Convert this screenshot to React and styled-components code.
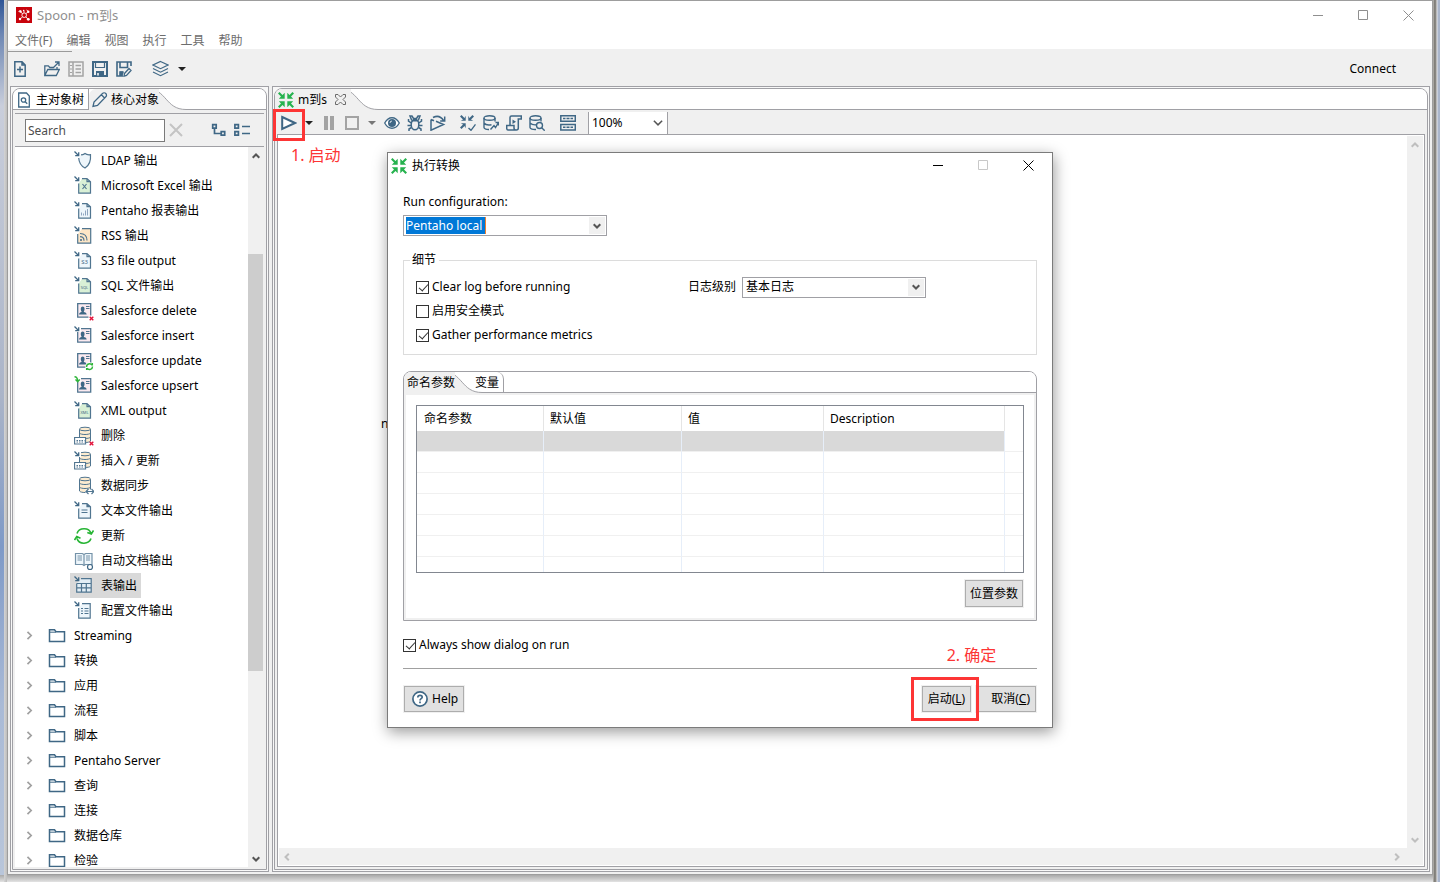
import React, { useState } from 'react';
import styled, { createGlobalStyle, css } from 'styled-components';

const colors = {
  chrome: '#f0f0f0',
  line: '#a0a0a5',
  icon: '#3f6785',
  iconSoft: '#507590',
  iconPale: '#eef6fb',
  disabled: '#a3a3a3',
  red: '#fd3535',
  green: '#26b24e',
};

const GlobalStyle = createGlobalStyle`
  * {
    box-sizing: border-box;
  }
  body {
    margin: 0;
    font-family: 'Noto Sans', 'Noto Sans CJK SC', sans-serif;
    font-size: 12px;
    line-height: 16px;
    color: #000;
  }
  button, input, select {
    font: inherit;
    color: inherit;
    margin: 0;
  }
  svg {
    display: block;
    flex: none;
  }
`;

const Desktop = styled.div`
  display: flex;
  height: 100vh;
  min-height: 760px;
  padding: 0 7px 7px 7px;
  background:
    linear-gradient(90deg, transparent 4px, #d4d4d4 4px, #bdbdbd 7px, transparent 7px) left / 7px 100% no-repeat,
    linear-gradient(90deg, #d5d3cf 0, #7d7b76 1px, #8d8b86 3px, #e8e8ea 4px, #aab6cc 5px, #aab6cc 7px) right / 7px 100% no-repeat,
    linear-gradient(180deg, #a9a9a9, #e3e3e3) bottom / 100% 7px no-repeat,
    linear-gradient(180deg, #2f5596 0, #6f88b4 4%, #c9cedb 12%, #aab4c8 45%, #7f9ac7 62%, #a9bad6 80%, #b9c6da 100%);
`;
const Window = styled.div`
  flex: 1;
  min-width: 0;
  display: flex;
  flex-direction: column;
  border: 1px solid #9d9d9d;
  background-color: ${colors.chrome};
`;
const TitleBar = styled.header`
  display: flex;
  align-items: center;
  height: 30px;
  padding: 0 18px 2px 8px;
  gap: 5px;
  background-color: #fff;
  font-size: 13px;
  color: #8f8f8f;
`;
const WindowButtons = styled.div`
  display: flex;
  gap: 34px;
  margin-left: auto;
`;
const PlainButton = styled.button`
  display: flex;
  align-items: center;
  justify-content: center;
  padding: 0;
  border: none;
  background: none;
`;
const MenuBar = styled.nav`
  display: flex;
  gap: 14px;
  height: 18px;
  padding: 2px 0 0 7px;
  background-color: #fff;
`;
const MenuItem = styled(PlainButton)`
  color: #6d6d6d;
`;
const MainToolbar = styled.div`
  display: flex;
  align-items: center;
  gap: 8px;
  height: 37px;
  padding: 2px 36px 0 4px;
  background:
    linear-gradient(#9b9b9b, #9b9b9b) 0 2px / 64px 1px no-repeat;
`;
const ToolGap = styled.span`
  width: ${(props) => props.$size}px;
`;
const ConnectButton = styled(PlainButton)`
  margin-left: auto;
`;
const Panels = styled.div`
  flex: 1;
  min-height: 0;
  display: flex;
  gap: 3px;
  padding: 0 2px 2px 2px;
`;
const Panel = styled.section`
  display: flex;
  flex: ${(props) => (props.$wide ? '1' : '0 0 259px')};
  min-width: 0;
  padding: 1px;
  border: 1px solid ${colors.line};
  background-color: #f8f8f8;
`;
const PanelFrame = styled.div`
  flex: 1;
  min-width: 0;
  display: flex;
  flex-direction: column;
  border: 1px solid ${colors.line};
  border-radius: 8px 8px 0 0;
  background-color: ${colors.chrome};
`;
const TabHeader = styled.div`
  display: flex;
  height: 21px;
  flex: none;
  border-radius: 7px 7px 0 0;
  background-color: #fff;
  box-shadow: inset 0 -1px 0 ${colors.line};
  overflow: hidden;
`;
const Tab = styled(PlainButton)`
  position: relative;
  gap: 3px;
  padding: 0 4px;
  ${(props) =>
    props.$active
      ? css`
          background-color: ${colors.chrome};
          padding: 0 0 0 3px;
          border-radius: 7px 0 0 0;
        `
      : css`
          border-right: 1px solid ${colors.line};
          border-radius: 0 ${props.$rounded ? '7px' : '0'} 0 0;
        `}
`;
const VariablesTab = styled(Tab)`
  margin-left: -11px;
`;
const FileTab = styled(Tab)`
  gap: 4px;
  padding-right: 5px;
`;
const TabText = styled.span`
  position: relative;
`;
const TabClose = styled.span`
  margin-left: 4px;
`;
const CurveSvg = styled.svg`
  margin-left: -12px;
`;

const PanelBody = styled.div`
  flex: 1;
  min-height: 0;
  display: flex;
  flex-direction: column;
  padding: ${(props) => (props.$top ? '3px' : '0')} 2px 2px 2px;
`;
const SearchBar = styled.div`
  display: flex;
  align-items: center;
  height: 34px;
  flex: none;
  padding: 0 14px 0 10px;
  border: solid ${colors.line};
  border-width: 1px 0;
`;
const SearchInput = styled.input`
  width: 140px;
  height: 23px;
  padding: 0 2px;
  border: 1px solid #7a7a7a;
  background-color: #fff;
  &::placeholder {
    color: #4d4d4d;
    opacity: 1;
  }
`;
const SearchTools = styled.div`
  display: flex;
  gap: 7px;
  margin-left: auto;
`;
const TreeArea = styled.div`
  flex: 1;
  min-height: 0;
  display: flex;
  background-color: #fff;
`;
const Tree = styled.ul`
  flex: 1;
  margin: 0;
  padding: 1px 0 0;
  list-style: none;
  overflow: hidden;
`;
const Row = styled.li`
  display: flex;
  height: 25px;
  padding-left: ${(props) => (props.$leaf ? '55px' : '10px')};
`;
const Leaf = styled.div`
  display: flex;
  align-items: center;
  gap: 7px;
  padding: 0 4px;
  background-color: ${(props) => (props.$selected ? '#d9d9d9' : 'transparent')};
`;
const Folder = styled.div`
  display: flex;
  align-items: center;
  gap: 8px;
`;
const FolderLead = styled.span`
  display: flex;
  align-items: center;
  gap: 14px;
`;
const ScrollBar = styled.div`
  display: flex;
  flex-direction: ${(props) => (props.$horizontal ? 'row' : 'column')};
  justify-content: space-between;
  flex: 0 0 16px;
  padding-right: ${(props) => (props.$horizontal ? '18px' : '0')};
  background-color: ${colors.chrome};
`;
const ScrollButton = styled(PlainButton)`
  width: 16px;
  height: 17px;
`;
const ScrollSpace = styled.div`
  flex: ${(props) => props.$share};
`;
const ScrollThumb = styled(ScrollSpace)`
  width: 15px;
  background-color: #cdcdcd;
`;

const EditorToolbar = styled.div`
  display: flex;
  align-items: center;
  gap: 7px;
  height: 24px;
  flex: none;
  padding: 2px 0 0 4px;
`;
const RunSlot = styled.div`
  position: relative;
`;
const ZoomSlot = styled.div`
  display: flex;
  margin-left: 5px;
`;
const Highlight = styled.span`
  position: absolute;
  inset: ${(props) => props.$inset};
  border: 3px solid ${colors.red};
  pointer-events: none;
  z-index: 3;
`;
const Note = styled.span`
  position: absolute;
  font-size: 16px;
  line-height: 20px;
  color: ${colors.red};
  white-space: nowrap;
`;
const CanvasNote = styled(Note)`
  left: 13px;
  top: 10px;
`;
const FooterNote = styled(Note)`
  left: 25px;
  bottom: 47px;
`;
const Canvas = styled.main`
  position: relative;
  flex: 1;
  min-height: 0;
  display: flex;
  flex-direction: column;
  padding: 1px;
  border: 1px solid ${colors.line};
  background-color: #fff;
`;
const CanvasRow = styled.div`
  flex: 1;
  display: flex;
`;
const Drawing = styled.div`
  flex: 1;
`;
const StepLabel = styled.span`
  position: absolute;
  left: 103px;
  top: 281px;
`;

const SelectBox = styled.span`
  position: relative;
  display: inline-flex;
  width: ${(props) => props.$width}px;
  height: ${(props) => props.$height}px;
`;
const Select = styled.select`
  appearance: none;
  width: 100%;
  height: 100%;
  padding: 0 20px 0 3px;
  border: 1px solid ${colors.line};
  border-width: ${(props) => (props.$sidesOnly ? '0 1px' : '1px')};
  border-radius: 0;
  background-color: #fff;
`;
const SelectArrow = styled.span`
  position: absolute;
  top: 2px;
  right: 2px;
  bottom: 2px;
  width: 16px;
  display: flex;
  align-items: center;
  justify-content: center;
  background-color: ${(props) => (props.$flat ? 'transparent' : colors.chrome)};
  pointer-events: none;
`;

const DialogWindow = styled.form`
  position: absolute;
  left: 109px;
  top: 17px;
  width: 666px;
  border: 1px solid #7b7b7b;
  background-color: #fff;
  box-shadow: 1px 4px 14px rgba(0, 0, 0, 0.4);
  z-index: 2;
`;
const DialogTitle = styled.div`
  display: flex;
  align-items: center;
  gap: 5px;
  height: 25px;
  padding: 0 18px 0 3px;
`;
const DialogBody = styled.div`
  display: flex;
  flex-direction: column;
  padding: 16px 15px 15px;
`;
const Combo = styled.div`
  display: flex;
  align-items: center;
  justify-content: space-between;
  width: 204px;
  height: 21px;
  margin: 5px 0 1px;
  padding: 1px;
  border: 1px solid ${colors.line};
`;
const ComboInput = styled.input`
  width: 80px;
  height: 17px;
  margin-left: 1px;
  padding: 0;
  border: none;
  border-right: 1px solid #f08030;
  outline: none;
  background-color: #0078d7;
  color: #fff;
`;
const ComboButton = styled(PlainButton)`
  width: 16px;
  height: 17px;
  background-color: ${colors.chrome};
`;
const Details = styled.fieldset`
  margin: 15px 0 0;
  padding: 7px 12px 7px;
  border: 1px solid #dcdcdc;
`;
const Legend = styled.legend`
  margin-left: -6px;
  padding: 0 3px 0 2px;
`;
const DetailsGrid = styled.div`
  display: grid;
  grid-template-columns: 272px 1fr;
  grid-auto-rows: 24px;
  align-items: center;
`;
const CheckLabel = styled.label`
  display: flex;
  align-items: center;
  gap: 3px;
  grid-column: 1;
`;
const Checkbox = styled.input`
  appearance: none;
  position: relative;
  width: 13px;
  height: 13px;
  border: 1px solid #333;
  background-color: #fff;
  &:checked::after {
    content: '';
    position: absolute;
    left: 4px;
    top: 0;
    width: 4px;
    height: 8px;
    border: solid #333;
    border-width: 0 1px 1px 0;
    transform: rotate(42deg);
  }
`;
const LevelLabel = styled.label`
  display: flex;
  align-items: center;
  gap: 6px;
  grid-column: 2;
  grid-row: 1;
`;
const ParamFolder = styled.div`
  margin-top: 16px;
  border: 1px solid ${colors.line};
  border-radius: 8px 8px 0 0;
`;
const ParamBody = styled.div`
  display: flex;
  flex-direction: column;
  align-items: flex-end;
  gap: 7px;
  padding: 10px 10px 11px;
  border: 2px solid ${colors.chrome};
`;
const TableFrame = styled.div`
  width: 100%;
  height: 168px;
  overflow: hidden;
  border: 1px solid #828790;
`;
const ParamTable = styled.table`
  width: 100%;
  table-layout: fixed;
  border-collapse: separate;
  border-spacing: 0;
`;
const HeadCell = styled.th`
  width: ${(props) => (props.$width ? `${props.$width}px` : 'auto')};
  height: 25px;
  padding: 0 6px;
  border-right: ${(props) => (props.$width ? '1px solid #e5e5e5' : 'none')};
  text-align: left;
  font-weight: normal;
  &:first-child {
    padding-left: 7px;
  }
`;
const Cell = styled.td`
  height: 21px;
  padding: 0;
  border-bottom: 1px solid #f0f0f0;
  border-right: ${(props) => (props.$filler ? 'none' : '1px solid #e6eef9')};
  background-color: ${(props) => (props.$selected ? '#d9d9d9' : '#fff')};
`;
const AlwaysLabel = styled(CheckLabel)`
  margin-top: 16px;
`;
const Footer = styled.div`
  display: flex;
  justify-content: space-between;
  margin-top: 15px;
  padding: 17px 1px 0;
  border-top: 1px solid #a0a0a0;
`;
const FooterActions = styled.div`
  display: flex;
  gap: 5px;
`;
const StartSlot = styled.div`
  position: relative;
`;
const PushButton = styled.button`
  display: flex;
  align-items: center;
  gap: 4px;
  height: 26px;
  padding: ${(props) => props.$padding || '0 5px'};
  border: 1px solid #adadad;
  background-color: #e1e1e1;
  box-shadow: 0 0 0 1px ${colors.chrome};
  white-space: nowrap;
`;
const PositionButton = styled(PushButton)`
  height: 27px;
  margin-right: 1px;
  padding: 0 4px;
`;

const Glyph = ({ size = 16, color = colors.icon, width = 1.5, children }) => (
  <svg
    width={size}
    height={size}
    viewBox={`0 0 ${size} ${size}`}
    fill="none"
    stroke={color}
    strokeWidth={width}
    aria-hidden="true"
  >
    {children}
  </svg>
);

const TabCurve = () => (
  <CurveSvg width="39" height="21" viewBox="0 0 39 21" aria-hidden="true">
    <path d="M0 0H39V21H0z" fill="#fff" />
    <path d="M0 0C20 0 18 20.500 38 20.500L39 21H0Z" fill={colors.chrome} />
    <path d="M0 -0.500C20 0 18 20.500 39 20.500" fill="none" stroke={colors.line} />
  </CurveSvg>
);
const Chevron = ({ turn = 0, color = '#555', size = 8, width = 2 }) => (
  <svg width={size} height={size} viewBox="0 0 8 8" fill="none" stroke={color} strokeWidth={width} aria-hidden="true">
    <path d="M0.700 2.200 4 5.500 7.300 2.200" transform={`rotate(${turn} 4 4)`} />
  </svg>
);
const Caret = ({ color = '#222' }) => (
  <svg width="10" height="4" viewBox="0 0 10 4" fill={color} aria-hidden="true">
    <path d="M1 0H9L5 4z" />
  </svg>
);
const MinimizeIcon = () => (
  <Glyph size={11} color="currentColor" width={1}>
    <path d="M0 5.500h10" />
  </Glyph>
);
const MaximizeIcon = ({ color = 'currentColor' }) => (
  <Glyph size={11} color={color} width={1}>
    <path d="M.5.500h9v9h-9z" />
  </Glyph>
);
const CloseIcon = () => (
  <Glyph size={11} color="currentColor" width={1}>
    <path d="M.5.500l10 10M10.500.500l-10 10" />
  </Glyph>
);
const AppIcon = () => (
  <svg width="16" height="16" viewBox="0 0 16 16" aria-hidden="true">
    <rect width="16" height="16" fill="#c8030c" />
    <g fill="none" stroke="#fff" strokeWidth="0.900">
      <circle cx="8.200" cy="8.200" r="2.300" />
      <path d="M6.500 6.500 4.500 5M10 6.500l2-1.500M6.500 9.800l-2 2M9.800 9.800l2 2.200M8 5.700V4M2.500 4.500l2-1M10.500 3l2 1.500M3 12.500l2-.5" />
    </g>
    <g fill="#fff">
      <circle cx="4.500" cy="4.500" r="1.200" />
      <circle cx="12.300" cy="4.700" r="1.200" />
      <circle cx="7.700" cy="3.500" r="0.800" />
      <circle cx="4" cy="12" r="1.200" />
      <circle cx="12.300" cy="12.300" r="1.400" />
    </g>
  </svg>
);
const InwardArrow = ({ turn, center }) => (
  <path
    transform={`rotate(${turn} ${center} ${center})`}
    d={`M0 1.500 1.500 0 4.500 3 ${center - 1.300} .8V${center - 1.300}H.8L3 4.500z`}
  />
);
const TransIcon = () => (
  <svg width="16" height="16" viewBox="0 0 16 16" fill={colors.green} aria-hidden="true">
    {[0, 90, 180, 270].map((turn) => (
      <InwardArrow key={turn} turn={turn} center={8} />
    ))}
  </svg>
);
const NewIcon = () => (
  <Glyph>
    <path d="M2.800.800h7.200l3.200 3.200v11.200H2.800zM10 .800V4h3.200M8 5.500v6M5 8.500h6" />
  </Glyph>
);
const OpenIcon = () => (
  <Glyph width={1.300}>
    <path d="M.8 14.500V4.800h3.500l1.500 1.700h4M.8 14.500l3-6h11.500l-3 6zM9.500 6.500 14.500 1.500M11 1h4v4M13 6v2.500" />
  </Glyph>
);
const ExploreIcon = () => (
  <Glyph color={colors.disabled}>
    <path d="M1 1h14v14H1zM5 1v14M7.500 4.500H13M7.500 8H13M7.500 11.500H13" />
    <path d="M2 4.500h2M2 8h2M2 11.500h2" strokeWidth="1" />
  </Glyph>
);
const SaveIcon = () => (
  <Glyph width={2}>
    <path d="M1 1h14v14H1z" />
    <path d="M3.500 1v5.500h9V1" strokeWidth="1.200" />
    <path d="M4 10h8v5H4z" fill={colors.icon} stroke="none" />
    <path d="M6 12v2.500" stroke="#fff" strokeWidth="1.500" />
  </Glyph>
);
const SaveAsIcon = () => (
  <Glyph width={1.600}>
    <path d="M7 15H1V1h14v4M4 1v5.500h7.500V1M4 15v-4h3" />
    <path d="M4 10.500h4L6.500 15H4z" fill={colors.icon} stroke="none" />
    <path d="M8.500 12.500 13 7.500l2 2-4.500 5-2.500.7z" strokeWidth="1.300" />
  </Glyph>
);
const LayersIcon = () => (
  <Glyph size={17} width={1.200}>
    <path d="M8.500 1.500 16 5l-7.500 3.700L1 5zM1 8.500l7.500 3.700L16 8.500M1 12l7.500 3.700L16 12" />
  </Glyph>
);
const ObjectTreeIcon = () => (
  <Glyph width={1.300}>
    <path d="M1.700 1h7.800l2.800 3v11H1.700z" />
    <circle cx="6.500" cy="8" r="2.200" />
    <path d="M8.200 9.700l2 2" />
  </Glyph>
);
const PencilIcon = () => (
  <Glyph width={1.300}>
    <path d="M1 14.500l1-4.500L10.500 1.500a1.800 1.800 0 0 1 3.300 3.300L5.500 13.500zM9.500 2.800 12.500 6" />
  </Glyph>
);
const ClearIcon = () => (
  <Glyph size={14} color="#c4c4c4" width={2}>
    <path d="M1 1l12 12M13 1 1 13" />
  </Glyph>
);
const ExpandIcon = () => (
  <Glyph width={1.700}>
    <path d="M1.700 2.700h3.500v3.500H1.700zM10.200 9.700h3.500v3.500h-3.500zM3.500 6v5.500h6.500" />
  </Glyph>
);
const CollapseIcon = () => (
  <Glyph width={1.700}>
    <path d="M.9 2.700h3.500v3.500H.9zM.9 9.700h3.500v3.500H.9zM8 4.500h8M8 11.500h8" />
  </Glyph>
);
const CloseTabIcon = () => (
  <Glyph size={11} color="#6b6b6b" width={1}>
    <path d="M.5.500h2.500L5.500 3 8 .500h2.500V3L8 5.500l2.500 2.500v2.500H8L5.500 8 3 10.500H.5V8L3 5.500.5 3z" />
  </Glyph>
);
const PlayIcon = () => (
  <Glyph width={2}>
    <path d="M1.200 2 14 8 1.200 14z" fill="#fff" />
  </Glyph>
);
const PauseIcon = () => (
  <Glyph color="none">
    <path d="M3 1h4v14H3zM9 1h4v14H9z" fill={colors.disabled} />
  </Glyph>
);
const StopIcon = () => (
  <Glyph color={colors.disabled} width={2}>
    <path d="M2 2h12v12H2z" />
  </Glyph>
);
const EyeIcon = () => (
  <Glyph width={1.300}>
    <path d="M.7 8C4.500 1 11.500 1 15.300 8 11.500 15 4.500 15 .7 8z" fill="#fff" />
    <circle cx="8" cy="8" r="4" fill={colors.icon} stroke="none" />
    <path d="M6 8a2 2 0 0 1 2-2" stroke="#fff" strokeWidth="0.800" />
  </Glyph>
);
const BugIcon = () => (
  <Glyph width={1.500}>
    <ellipse cx="8" cy="9.500" rx="3.800" ry="5.300" />
    <path d="M4.800 5.500 3 1h2l1.500 2.500h3L11 1h2l-1.800 4.500M4.300 8 1.500 6V4M4 10.500H.5M4.500 12.500l-2.500 1.500v2M11.700 8l2.800-2V4M12 10.500h3.500M11.500 12.500l2.500 1.500v2M5 5.800h6" />
  </Glyph>
);
const ReplayIcon = () => (
  <Glyph width={1.500}>
    <path d="M1 4.500v10.700L13.500 9.500 6 6.200M1 4.500l3 1.300M3 2.500c4-2 8-1 10.500 3M14.700 1.500v4.500h-4.500" />
  </Glyph>
);
const VerifyIcon = () => (
  <Glyph color="none">
    <g fill={colors.icon}>
      {[0, 90, 270].map((turn) => (
        <InwardArrow key={turn} turn={turn} center={7} />
      ))}
    </g>
    <path d="M8.500 13l2.500 2.300 4.500-6" stroke={colors.icon} strokeWidth="1.400" />
  </Glyph>
);
const ImpactIcon = () => (
  <Glyph width={1.400}>
    <ellipse cx="6.500" cy="3" rx="5.500" ry="2.200" />
    <path d="M1 3v9.500c0 1.500 3 2.200 5 2M1 8c1.500 2 5 2.200 7.500 1.700M12 3v3.500M7.500 14.500 11 10.500l1.500 2 3-5M12.500 7.500h3v3" />
  </Glyph>
);
const SqlScriptIcon = () => (
  <Glyph width={1.500}>
    <path d="M4 10.500V2.500C4 1.500 4.700 1 5.500 1h9.800v3h-3v9c0 1.300-.8 2-2 2H2c-1 0-1.300-1-1.300-2v-2.500H8V13c0 1.300.8 2 2 2" />
    <path d="M6.500 4.500 10 6.700 6.500 9z" fill={colors.icon} stroke="none" />
  </Glyph>
);
const DbExploreIcon = () => (
  <Glyph width={1.400}>
    <ellipse cx="6.500" cy="3" rx="5.500" ry="2.200" />
    <path d="M1 3v9.500c0 1.500 3 2.200 6 2M1 8c1.500 1.500 3.500 2 6 1.800M12 3v3.500" />
    <circle cx="10.500" cy="10.500" r="3" />
    <path d="M12.700 12.700l3 3" />
  </Glyph>
);
const ResultsIcon = () => (
  <Glyph width={1.500}>
    <path d="M.8.800h14.500v5.500H.8zM.8 9.500h14.500V15H.8z" />
    <path d="M3 3.500h2.500M6.500 3.500h3M10.500 3.500H13M3 12.200h2.500M6.500 12.200h3M10.500 12.200H13" strokeWidth="1.500" />
  </Glyph>
);
const HelpIcon = () => (
  <Glyph width={1.700}>
    <circle cx="8" cy="8" r="7.100" fill="#fff" />
    <path d="M5.800 6.500C5.800 3.500 10.300 3.700 10.200 6.200 10.200 7.700 8 7.700 8 9.500M8 10.500v1.700" />
  </Glyph>
);
const FolderIcon = () => (
  <Glyph size={18} width={1.500}>
    <path d="M1.500 14.500V2.700h5l1.500 2H16.500v9.800z" />
    <path d="M2 5.200h6" strokeWidth="1" />
  </Glyph>
);

const InArrow = () => (
  <path d="M.5.500 4.500 4.500M4.700 1.200v3.500H1.200" strokeWidth="1.300" stroke={colors.icon} fill="none" />
);
const Page = ({ fill }) => (
  <>
    <path d="M4.700 7.500v9.700h11.800V5.700L13 2.700H8L4.700 7.500z" fill={fill} stroke="none" />
    <path d="M4.700 7.500v9.700h11.800V5.700L13 2.700H8M13 2.700v3h3.500" strokeWidth="1.200" />
  </>
);
const Person = () => (
  <>
    <path d="M3.700 2.700h13v13.500h-13z" fill="#fbeaf0" strokeWidth="1.300" />
    <path
      d="M5 13.500c.2-2 1.800-2 2.700-2.700-1.500-2.300-1-5.300 1-5.300s2.500 3 1 5.300c.9.700 2.800.7 3 2.700z"
      fill={colors.icon}
      stroke="none"
    />
    <path d="M12 5.500h3.500M12 7.500h3.500" strokeWidth="1" />
  </>
);
const Barrel = () => (
  <g strokeWidth="1">
    <path d="M5.500 3v12c1 2.200 10 2.200 11 0V3z" fill="#fdecd0" stroke="none" />
    <path d="M5.500 3V15c1 2 10 2 11 0V3M5.500 7c1 2 10 2 11 0M5.500 11c1 2 10 2 11 0" />
    <ellipse cx="11" cy="3" rx="5.500" ry="1.800" fill="#fdecd0" />
  </g>
);
const Dashes = () => (
  <>
    <path d="M.6 11.500h11v6.500H.6z" fill="#fff" strokeWidth="1.100" />
    <path d="M2.500 14.500h8M2.500 16h8" strokeDasharray="1.500 1" strokeWidth="1" />
  </>
);
const RedCross = () => <path d="M15.700 15.700l3.600 3.600M19.300 15.700l-3.600 3.600" stroke="#e3123a" strokeWidth="1.400" />;

const PageMark = ({ children }) => (
  <text x="10.500" y="13" textAnchor="middle" fontSize={children.length > 2 ? 4 : 6} fill={colors.icon} stroke="none">
    {children}
  </text>
);

// drawings for the step types in the tree, all on a 20px grid
const stepArt = {
  ldap: (
    <>
      <InArrow />
      <path
        d="M7 3.700c1.500.3 3-.3 4-1.200 1 .9 3 1.500 5.500 1.200.5 6-1 10.500-5.500 13.300C7 15 5 11.500 4.700 7"
        fill={colors.iconPale}
      />
    </>
  ),
  excel: (
    <>
      <Page fill="#d9f0d6" />
      <InArrow />
      <path d="M8.500 8l4 5M12.500 8l-4 5" />
    </>
  ),
  report: (
    <>
      <Page fill={colors.iconPale} />
      <InArrow />
      <path d="M7.500 14.500v-3M9.500 14.500v-2M11.500 14.500V9.500M13.500 14.500V8" strokeWidth="1" stroke="#8fa5c0" />
    </>
  ),
  rss: (
    <>
      <path d="M3.700 8v9.200h13V2.700H8z" fill="#fde6c6" stroke="none" />
      <path d="M3.700 8v9.200h13V2.700H8" />
      <InArrow />
      <path d="M6 10.700c2.500 0 4 1.500 4 4M6 7.500c4.500 0 7 2.700 7 7" />
      <circle cx="7" cy="14" r="1" fill={colors.icon} stroke="none" />
    </>
  ),
  s3: (
    <>
      <Page fill={colors.iconPale} />
      <InArrow />
      <PageMark>S3</PageMark>
    </>
  ),
  sql: (
    <>
      <Page fill="#d9f0d6" />
      <InArrow />
      <PageMark>SQL</PageMark>
    </>
  ),
  sfDelete: (
    <>
      <Person />
      <path d="M14.500 14.500h6v6h-6z" fill="#fff" stroke="none" />
      <RedCross />
    </>
  ),
  sfInsert: (
    <>
      <Person />
      <path d="M0 0h7v6H0z" fill="#fff" stroke="none" />
      <InArrow />
    </>
  ),
  sfUpdate: (
    <>
      <Person />
      <circle cx="15.500" cy="15.500" r="4.300" fill="#fff" stroke="none" />
      <path
        d="M12.500 16a3 3 0 0 1 5.500-1.800M18.500 15.500a3 3 0 0 1-5.500 1.700M18.300 12v2.500M12.700 19v-2"
        stroke="#2fb53a"
        strokeWidth="1.500"
      />
    </>
  ),
  sfUpsert: (
    <>
      <Person />
      <path d="M0 0h7v6H0z" fill="#fff" stroke="none" />
      <path d="M.5.700C3 .7 3.700 2 3.700 5.500M1.500 3.500l2.200 2.200L5.800 3.500" stroke="#2fb53a" strokeWidth="1.400" />
    </>
  ),
  xml: (
    <>
      <Page fill="#d9f0d6" />
      <InArrow />
      <PageMark>XML</PageMark>
    </>
  ),
  remove: (
    <>
      <Barrel />
      <Dashes />
      <RedCross />
    </>
  ),
  upsert: (
    <>
      <Barrel />
      <Dashes />
      <path d="M0 0h7v6H0z" fill="#fff" stroke="none" />
      <InArrow />
    </>
  ),
  sync: (
    <>
      <Barrel />
      <path d="M11.500 13.500h8.500v4.500h-8.500z" fill="#fff" stroke="none" />
      <path d="M12.500 15.500h7M14.500 13l-2.500 2.500 2.500 2.500M17.500 13l2.500 2.500-2.500 2.500" />
    </>
  ),
  text: (
    <>
      <Page fill={colors.iconPale} />
      <InArrow />
      <path d="M7.500 9h6M7.500 11.500h6" strokeWidth="1" />
    </>
  ),
  update: (
    <g stroke="#27b535" strokeWidth="1.600">
      <path d="M3 7.500c2-6 12-6.500 14 0M17 12.500c-2 6-12 6.500-14 0M19.500 4.500 17.300 8l-4-1.500M.5 14l2.300-3.500 3.700 1.700" />
    </g>
  ),
  docs: (
    <g stroke="#7492a8">
      <path d="M1.500 2.500h6.800L10 3.500l1.700-1H18v11h-6.500L10 14.500l-1.500-1h-7zM10 3.500v11" fill={colors.iconPale} />
      <path d="M3.500 5h4.500M3.500 7h4.500M3.500 9h4.500M12 5h4M12 7h4M12 9h4" strokeWidth="1" />
      <circle cx="16" cy="16" r="2.500" fill="#fff" stroke={colors.icon} />
    </g>
  ),
  table: (
    <>
      <path
        d="M2.700 7.500v8.700h14.500V2.700H7M2.700 7.500h14.500M2.700 11.800h14.500M7.500 7.500v8.700M12.300 7.500v8.700"
        fill="#e3eef5"
      />
      <InArrow />
    </>
  ),
  config: (
    <>
      <path d="M4.700 7v10.200h11.500V2.700H8z" fill={colors.iconPale} stroke="none" />
      <path d="M4.700 7v10.200h11.500V2.700H8" />
      <InArrow />
      <path d="M7 7.500h2M10.500 7.500h4M7 10h2M10.500 10h4M7 12.500h2M10.500 12.500h4" strokeWidth="1" />
    </>
  ),
};

const steps = [
  ['ldap', 'LDAP 输出'],
  ['excel', 'Microsoft Excel 输出'],
  ['report', 'Pentaho 报表输出'],
  ['rss', 'RSS 输出'],
  ['s3', 'S3 file output'],
  ['sql', 'SQL 文件输出'],
  ['sfDelete', 'Salesforce delete'],
  ['sfInsert', 'Salesforce insert'],
  ['sfUpdate', 'Salesforce update'],
  ['sfUpsert', 'Salesforce upsert'],
  ['xml', 'XML output'],
  ['remove', '删除'],
  ['upsert', '插入 / 更新'],
  ['sync', '数据同步'],
  ['text', '文本文件输出'],
  ['update', '更新'],
  ['docs', '自动文档输出'],
  ['table', '表输出'],
  ['config', '配置文件输出'],
];
const folders = ['Streaming', '转换', '应用', '流程', '脚本', 'Pentaho Server', '查询', '连接', '数据仓库', '检验'];
const menus = ['文件(F)', '编辑', '视图', '执行', '工具', '帮助'];
const columns = [
  ['命名参数', 127],
  ['默认值', 138],
  ['值', 142],
  ['Description', 181],
];

const Tool = ({ label, children }) => (
  <PlainButton type="button" aria-label={label}>
    {children}
  </PlainButton>
);

const CaptionButtons = ({ maxColor }) => (
  <WindowButtons>
    <Tool label="Minimize">
      <MinimizeIcon />
    </Tool>
    <Tool label="Maximize">
      <MaximizeIcon color={maxColor} />
    </Tool>
    <Tool label="Close">
      <CloseIcon />
    </Tool>
  </WindowButtons>
);

const Sidebar = () => {
  const [selected, setSelected] = useState('table');
  return (
    <Panel>
      <PanelFrame>
        <TabHeader>
          <Tab type="button">
            <ObjectTreeIcon />
            <TabText>主对象树</TabText>
          </Tab>
          <Tab type="button" $active>
            <PencilIcon />
            <TabText>核心对象</TabText>
          </Tab>
          <TabCurve />
        </TabHeader>
        <PanelBody $top>
          <SearchBar>
            <SearchInput type="text" placeholder="Search" aria-label="Search" />
            <ToolGap $size={4} />
            <Tool label="Clear">
              <ClearIcon />
            </Tool>
            <SearchTools>
              <Tool label="Expand all">
                <ExpandIcon />
              </Tool>
              <Tool label="Collapse all">
                <CollapseIcon />
              </Tool>
            </SearchTools>
          </SearchBar>
          <TreeArea>
            <Tree>
              {steps.map(([id, name]) => (
                <Row key={id} $leaf>
                  <Leaf $selected={selected === id} onClick={() => setSelected(id)}>
                    <Glyph size={20} width={1.200} color={colors.iconSoft}>
                      {stepArt[id]}
                    </Glyph>
                    {name}
                  </Leaf>
                </Row>
              ))}
              {folders.map((name) => (
                <Row key={name}>
                  <Folder>
                    <FolderLead>
                      <Chevron turn={-90} color="#a0a0a0" size={9} width={1.500} />
                      <FolderIcon />
                    </FolderLead>
                    {name}
                  </Folder>
                </Row>
              ))}
            </Tree>
            <ScrollBar>
              <ScrollButton type="button" aria-label="Scroll up">
                <Chevron turn={180} />
              </ScrollButton>
              <ScrollSpace $share={90} />
              <ScrollThumb $share={417} />
              <ScrollSpace $share={179} />
              <ScrollButton type="button" aria-label="Scroll down">
                <Chevron />
              </ScrollButton>
            </ScrollBar>
          </TreeArea>
        </PanelBody>
      </PanelFrame>
    </Panel>
  );
};

const RunDialog = () => (
  <DialogWindow onSubmit={(e) => e.preventDefault()}>
    <DialogTitle>
      <TransIcon />
      执行转换
      <CaptionButtons maxColor="#c8c8c8" />
    </DialogTitle>
    <DialogBody>
      <label htmlFor="run-config">Run configuration:</label>
      <Combo>
        <ComboInput id="run-config" type="text" defaultValue="Pentaho local" />
        <ComboButton type="button" aria-label="Show configurations">
          <Chevron />
        </ComboButton>
      </Combo>
      <Details>
        <Legend>细节</Legend>
        <DetailsGrid>
          <CheckLabel>
            <Checkbox type="checkbox" defaultChecked />
            Clear log before running
          </CheckLabel>
          <LevelLabel>
            日志级别
            <SelectBox $width={184} $height={21}>
              <Select defaultValue="基本日志">
                <option>基本日志</option>
              </Select>
              <SelectArrow>
                <Chevron />
              </SelectArrow>
            </SelectBox>
          </LevelLabel>
          <CheckLabel>
            <Checkbox type="checkbox" />
            启用安全模式
          </CheckLabel>
          <CheckLabel>
            <Checkbox type="checkbox" defaultChecked />
            Gather performance metrics
          </CheckLabel>
        </DetailsGrid>
      </Details>
      <ParamFolder>
        <TabHeader>
          <Tab type="button" $active>
            <TabText>命名参数</TabText>
          </Tab>
          <TabCurve />
          <VariablesTab type="button" $rounded>
            变量
          </VariablesTab>
        </TabHeader>
        <ParamBody>
          <TableFrame>
            <ParamTable>
              <thead>
                <tr>
                  {columns.map(([name, width]) => (
                    <HeadCell key={name} $width={width}>
                      {name}
                    </HeadCell>
                  ))}
                  <HeadCell as="td" />
                </tr>
              </thead>
              <tbody>
                {[0, 1, 2, 3, 4, 5, 6].map((row) => (
                  <tr key={row}>
                    {columns.map(([name]) => (
                      <Cell key={name} $selected={row === 0} />
                    ))}
                    <Cell $filler />
                  </tr>
                ))}
              </tbody>
            </ParamTable>
          </TableFrame>
          <PositionButton type="button">位置参数</PositionButton>
        </ParamBody>
      </ParamFolder>
      <AlwaysLabel>
        <Checkbox type="checkbox" defaultChecked />
        Always show dialog on run
      </AlwaysLabel>
      <Footer>
        <PushButton type="button" $padding="0 5px 0 7px">
          <HelpIcon />
          Help
        </PushButton>
        <FooterActions>
          <StartSlot>
            <PushButton type="submit">
              <span>
                启动(<u>L</u>)
              </span>
            </PushButton>
            <FooterNote>2. 确定</FooterNote>
            <Highlight $inset="-9px -8px -9px -11px" />
          </StartSlot>
          <PushButton type="button" $padding="0 5px 0 14px">
            <span>
              取消(<u>C</u>)
            </span>
          </PushButton>
        </FooterActions>
      </Footer>
    </DialogBody>
  </DialogWindow>
);

const Editor = () => (
  <Panel $wide>
    <PanelFrame>
      <TabHeader>
        <FileTab type="button" $active>
          <TransIcon />
          <TabText>m到s</TabText>
          <TabClose>
            <CloseTabIcon />
          </TabClose>
        </FileTab>
        <TabCurve />
      </TabHeader>
      <PanelBody>
        <EditorToolbar>
          <RunSlot>
            <Tool label="Run">
              <PlayIcon />
            </Tool>
            <Highlight $inset="-6px -8px -10px -8px" />
          </RunSlot>
          <Caret />
          <Tool label="Pause">
            <PauseIcon />
          </Tool>
          <Tool label="Stop">
            <StopIcon />
          </Tool>
          <Caret color="#777" />
          <Tool label="Preview">
            <EyeIcon />
          </Tool>
          <Tool label="Debug">
            <BugIcon />
          </Tool>
          <Tool label="Replay">
            <ReplayIcon />
          </Tool>
          <ToolGap $size={0} />
          <Tool label="Verify">
            <VerifyIcon />
          </Tool>
          <Tool label="Impact">
            <ImpactIcon />
          </Tool>
          <Tool label="Get SQL">
            <SqlScriptIcon />
          </Tool>
          <Tool label="Explore database">
            <DbExploreIcon />
          </Tool>
          <ToolGap $size={1} />
          <Tool label="Show results">
            <ResultsIcon />
          </Tool>
          <ZoomSlot>
            <SelectBox $width={80} $height={22}>
              <Select aria-label="Zoom" defaultValue="100%" $sidesOnly>
                <option>100%</option>
              </Select>
              <SelectArrow $flat>
                <Chevron width={1.200} size={10} />
              </SelectArrow>
            </SelectBox>
          </ZoomSlot>
        </EditorToolbar>
        <Canvas>
          <CanvasRow>
            <Drawing>
              <StepLabel>n</StepLabel>
              <CanvasNote>1. 启动</CanvasNote>
            </Drawing>
            <ScrollBar>
              <ScrollButton type="button" aria-label="Scroll up">
                <Chevron turn={180} color="#bfbfbf" />
              </ScrollButton>
              <ScrollButton type="button" aria-label="Scroll down">
                <Chevron color="#bfbfbf" />
              </ScrollButton>
            </ScrollBar>
          </CanvasRow>
          <ScrollBar $horizontal>
            <ScrollButton type="button" aria-label="Scroll left">
              <Chevron turn={90} color="#bfbfbf" />
            </ScrollButton>
            <ScrollButton type="button" aria-label="Scroll right">
              <Chevron turn={-90} color="#bfbfbf" />
            </ScrollButton>
          </ScrollBar>
          <RunDialog />
        </Canvas>
      </PanelBody>
    </PanelFrame>
  </Panel>
);

const App = () => (
  <Desktop>
    <GlobalStyle />
    <Window>
      <TitleBar>
        <AppIcon />
        Spoon - m到s
        <CaptionButtons />
      </TitleBar>
      <MenuBar>
        {menus.map((name) => (
          <MenuItem key={name} type="button">
            {name}
          </MenuItem>
        ))}
      </MenuBar>
      <MainToolbar>
        <Tool label="New">
          <NewIcon />
        </Tool>
        <ToolGap $size={0} />
        <Tool label="Open">
          <OpenIcon />
        </Tool>
        <Tool label="Explore">
          <ExploreIcon />
        </Tool>
        <Tool label="Save">
          <SaveIcon />
        </Tool>
        <Tool label="Save as">
          <SaveAsIcon />
        </Tool>
        <ToolGap $size={4} />
        <Tool label="Perspective">
          <LayersIcon />
        </Tool>
        <Caret />
        <ConnectButton type="button">Connect</ConnectButton>
      </MainToolbar>
      <Panels>
        <Sidebar />
        <Editor />
      </Panels>
    </Window>
  </Desktop>
);

export default App;
